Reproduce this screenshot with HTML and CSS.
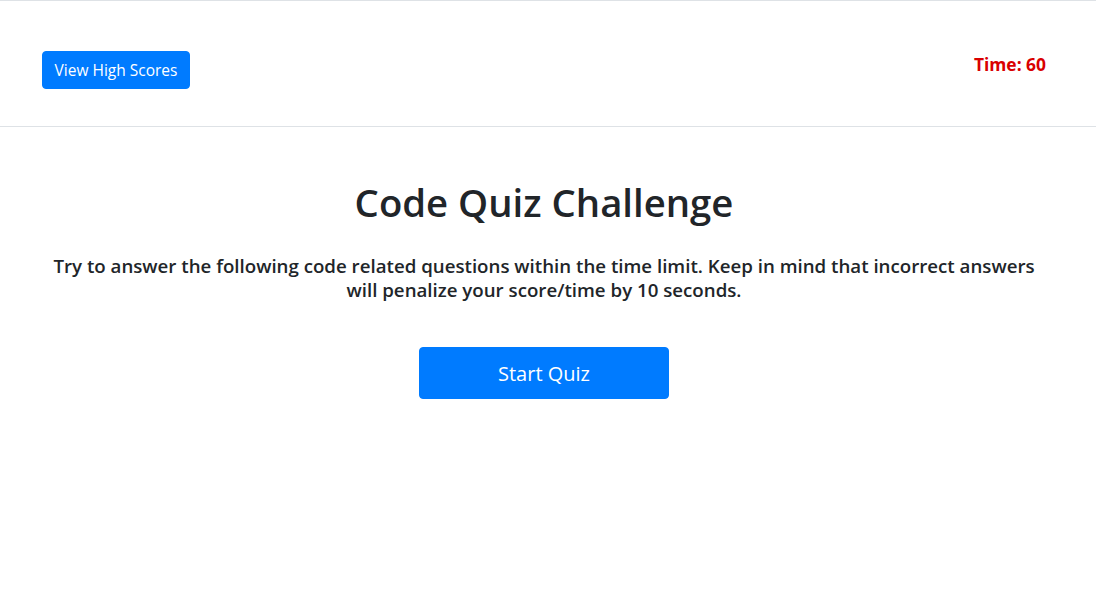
FILE: index.html
```html
<!DOCTYPE html>
<html lang="en">
<head>
<meta charset="utf-8">
<title>Code Quiz</title>
<link rel="stylesheet" href="styles.css">
</head>
<body>
<header class="topbar">
  <button class="btn btn-small">View High Scores</button>
  <div class="timer">Time: 60</div>
</header>
<main class="content">
  <h1 class="title">Code Quiz Challenge</h1>
  <p class="lead">Try to answer the following code related questions within the time limit. Keep in mind that incorrect answers will penalize your score/time by 10 seconds.</p>
  <button class="btn btn-large">Start Quiz</button>
</main>
</body>
</html>
```
FILE: styles.css
```css
* { box-sizing: border-box; }
html, body { margin: 0; padding: 0; background: #fff; }
body {
  font-family: "Open Sans", "Noto Sans", sans-serif;
  color: #212529;
  border-top: 1px solid #dee2e6;
}
.topbar {
  height: 126px;
  border-bottom: 1px solid #dee2e6;
  display: flex;
  justify-content: space-between;
  align-items: flex-start;
  padding: 50px 50px 0 42px;
}
.btn {
  font-family: inherit;
  background: #007bff;
  color: #fff;
  border: 1px solid #007bff;
  border-radius: 4px;
  cursor: pointer;
}
.btn-small {
  height: 38px;
  width: 148px;
  font-size: 15.5px;
  padding: 0;
}
.timer {
  color: #d90000;
  font-weight: 700;
  font-size: 17.4px;
  margin-top: 1px;
}
.content {
  display: flex;
  flex-direction: column;
  align-items: center;
  padding: 0 50px 0 42px;
  text-align: center;
}
.title {
  font-size: 38.3px;
  font-weight: 600;
  margin: 52px 0 0;
  line-height: 47px;
}
.lead {
  font-size: 18.7px;
  font-weight: 600;
  line-height: 24px;
  margin: 28px 0 0;
}
.btn-large {
  margin-top: 45px;
  width: 250px;
  height: 52px;
  font-size: 20px;
  padding: 0;
}
```
